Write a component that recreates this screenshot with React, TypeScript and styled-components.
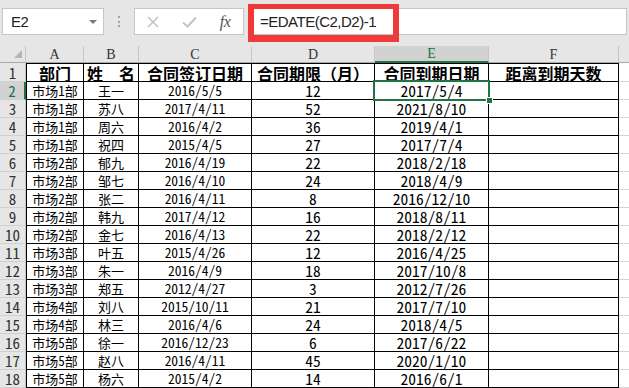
import React from 'react';
import styled, { createGlobalStyle } from 'styled-components';

const UI_FONT = `"Liberation Sans", Arial, sans-serif`;
const CELL_FONT = `"Noto Sans Mono CJK SC", "Noto Sans CJK SC", sans-serif`;
const GREEN = '#217346';
const COLS = '26px 58px 55px 113px 123px 114px 130px 1fr';

const GlobalStyles = createGlobalStyle`
  html, body {
    margin: 0;
    padding: 0;
    background: #e6e6e6;
  }
  * {
    box-sizing: border-box;
  }
`;

type Row = [string, string, string, string, string];

const rows: Row[] = [
  ['市场1部', '王一', '2016/5/5', '12', '2017/5/4'],
  ['市场1部', '苏八', '2017/4/11', '52', '2021/8/10'],
  ['市场1部', '周六', '2016/4/2', '36', '2019/4/1'],
  ['市场1部', '祝四', '2015/4/5', '27', '2017/7/4'],
  ['市场2部', '郁九', '2016/4/19', '22', '2018/2/18'],
  ['市场2部', '邹七', '2016/4/10', '24', '2018/4/9'],
  ['市场2部', '张二', '2016/4/11', '8', '2016/12/10'],
  ['市场2部', '韩九', '2017/4/12', '16', '2018/8/11'],
  ['市场2部', '金七', '2016/4/13', '22', '2018/2/12'],
  ['市场3部', '叶五', '2015/4/26', '12', '2016/4/25'],
  ['市场3部', '朱一', '2016/4/9', '18', '2017/10/8'],
  ['市场3部', '郑五', '2012/4/27', '3', '2012/7/26'],
  ['市场4部', '刘八', '2015/10/11', '21', '2017/7/10'],
  ['市场4部', '林三', '2016/4/6', '24', '2018/4/5'],
  ['市场5部', '徐一', '2016/12/23', '6', '2017/6/22'],
  ['市场5部', '赵八', '2016/4/11', '45', '2020/1/10'],
  ['市场5部', '杨六', '2015/4/2', '14', '2016/6/1'],
];

const headers = ['部门', '姓　名', '合同签订日期', '合同期限（月）', '合同到期日期', '距离到期天数'];
const letters = ['A', 'B', 'C', 'D', 'E', 'F'];
const sizes = [13, 13, 13.5, 15.5, 15.5];

export default function App() {
  return (
    <Screen>
      <GlobalStyles />
      <FormulaBar>
        <NameBox>
          <span>E2</span>
          <DropArrow />
        </NameBox>
        <Grip>
          <Dot />
          <Dot />
          <Dot />
        </Grip>
        <ButtonBox>
          <IconSlot>
            <svg width="12" height="12" viewBox="0 0 12 12">
              <path d="M1 1 L11 11 M11 1 L1 11" stroke="#c4c4c4" strokeWidth="1.6" fill="none" />
            </svg>
          </IconSlot>
          <IconSlot>
            <svg width="15" height="12" viewBox="0 0 15 12">
              <path d="M1 6.5 L5.5 10.5 L14 1.5" stroke="#c4c4c4" strokeWidth="2" fill="none" />
            </svg>
          </IconSlot>
          <IconSlot>
            <Fx>fx</Fx>
          </IconSlot>
        </ButtonBox>
        <FormulaInput>
          =EDATE(C2,D2)-1
          <Annotation />
        </FormulaInput>
      </FormulaBar>

      <Sheet>
        <GridRow $h={17}>
          <Corner>
            <SelectAll />
          </Corner>
          {letters.map((l) => (
            <ColHead key={l} $active={l === 'E'}>
              {l}
            </ColHead>
          ))}
          <ColHead $active={false} $last />
        </GridRow>

        <GridRow $h={19}>
          <RowHead $active={false}>1</RowHead>
          {headers.map((h, i) => (
            <Cell key={h} $first={i === 0} $top $bold $size={16}>
              {h}
            </Cell>
          ))}
          <Blank />
        </GridRow>

        {rows.map((r, idx) => (
          <GridRow key={idx} $h={18}>
            <RowHead $active={idx === 0}>{idx + 2}</RowHead>
            {r.map((v, i) => (
              <Cell key={i} $first={i === 0} $size={sizes[i]}>
                {v}
              </Cell>
            ))}
            <Cell $size={13} />
            <Blank />
          </GridRow>
        ))}

        <Selection>
          <Handle />
        </Selection>
      </Sheet>
    </Screen>
  );
}

const Screen = styled.div`
  width: 629px;
  height: 388px;
  overflow: hidden;
  background: #e6e6e6;
`;

const FormulaBar = styled.div`
  display: flex;
  align-items: flex-start;
  height: 46px;
  padding: 8px 2px 0 2px;
  font-family: ${UI_FONT};
  font-size: 15px;
  letter-spacing: -0.5px;
  color: #222;
`;

const NameBox = styled.div`
  width: 102px;
  height: 27px;
  background: #fff;
  border: 1px solid #c6c6c6;
  display: flex;
  align-items: center;
  justify-content: space-between;
  padding: 0 6px 0 8px;
`;

const DropArrow = styled.div`
  width: 0;
  height: 0;
  border-left: 4px solid transparent;
  border-right: 4px solid transparent;
  border-top: 4px solid #7a7a7a;
`;

const Grip = styled.div`
  width: 30px;
  height: 27px;
  display: flex;
  flex-direction: column;
  align-items: center;
  justify-content: center;
  gap: 2.5px;
`;

const Dot = styled.div`
  width: 2px;
  height: 2px;
  background: #a3a3a3;
`;

const ButtonBox = styled.div`
  width: 110px;
  height: 27px;
  background: #fff;
  border: 1px solid #c6c6c6;
  display: flex;
`;

const IconSlot = styled.div`
  width: 36px;
  display: flex;
  align-items: center;
  justify-content: center;
`;

const Fx = styled.span`
  font-family: "Liberation Serif", serif;
  font-style: italic;
  font-size: 16px;
  color: #555;
  letter-spacing: -0.5px;
`;

const FormulaInput = styled.div`
  position: relative;
  flex: 1;
  margin-left: 4px;
  height: 27px;
  background: #fff;
  border: 1px solid #c6c6c6;
  display: flex;
  align-items: center;
  padding-left: 11px;
`;

const Annotation = styled.div`
  position: absolute;
  left: -1px;
  top: -5px;
  width: 151px;
  height: 38px;
  border: 6px solid #f03a3a;
  border-top-width: 5px;
  border-bottom-width: 7px;
`;

const Sheet = styled.div`
  position: relative;
  background: #fff;
`;

const GridRow = styled.div<{ $h: number }>`
  display: grid;
  grid-template-columns: ${COLS};
  grid-template-rows: ${(p) => p.$h}px;
`;

const Corner = styled.div`
  background: #e6e6e6;
  border-right: 1px solid #c6c6c6;
  border-bottom: 1px solid #aaa;
  display: flex;
  align-items: flex-end;
  justify-content: flex-end;
  padding: 0 3px 4px 0;
`;

const SelectAll = styled.div`
  width: 0;
  height: 0;
  border-left: 8px solid transparent;
  border-bottom: 8px solid #b5b5b5;
`;

const ColHead = styled.div<{ $active: boolean; $last?: boolean }>`
  background: ${(p) => (p.$active ? '#d2d2d2' : '#e6e6e6')};
  color: ${(p) => (p.$active ? GREEN : '#333')};
  border-right: ${(p) => (p.$last ? 'none' : '1px solid #c6c6c6')};
  border-bottom: ${(p) => (p.$active ? `2px solid ${GREEN}` : '1px solid #aaa')};
  font-family: "Liberation Serif", serif;
  font-size: 14px;
  line-height: 1;
  display: flex;
  align-items: center;
  justify-content: center;
  padding-top: 1px;
`;

const RowHead = styled.div<{ $active: boolean }>`
  background: ${(p) => (p.$active ? '#d2d2d2' : '#e6e6e6')};
  color: ${(p) => (p.$active ? GREEN : '#333')};
  border-right: ${(p) => (p.$active ? `2px solid ${GREEN}` : '1px solid #c6c6c6')};
  border-bottom: 1px solid #d0d0d0;
  font-family: ${CELL_FONT};
  font-size: 15px;
  font-weight: 300;
  line-height: 1;
  display: flex;
  align-items: center;
  justify-content: center;
`;

const Cell = styled.div<{ $first?: boolean; $top?: boolean; $bold?: boolean; $size: number }>`
  border-right: 1px solid #000;
  border-bottom: 1px solid #000;
  border-left: ${(p) => (p.$first ? '1px solid #000' : 'none')};
  border-top: ${(p) => (p.$top ? '1px solid #000' : 'none')};
  font-family: ${CELL_FONT};
  font-size: ${(p) => p.$size}px;
  font-weight: ${(p) => (p.$bold ? 700 : 300)};
  line-height: 1;
  color: #000;
  white-space: nowrap;
  display: flex;
  align-items: center;
  justify-content: center;
`;

const Blank = styled.div`
  border-bottom: 1px solid #d4d4d4;
`;

const Selection = styled.div`
  position: absolute;
  left: 373px;
  top: 34px;
  width: 117px;
  height: 21px;
  border: 2px solid ${GREEN};
`;

const Handle = styled.div`
  position: absolute;
  right: -5px;
  bottom: -5px;
  width: 7px;
  height: 7px;
  background: ${GREEN};
  border: 1px solid #fff;
`;
